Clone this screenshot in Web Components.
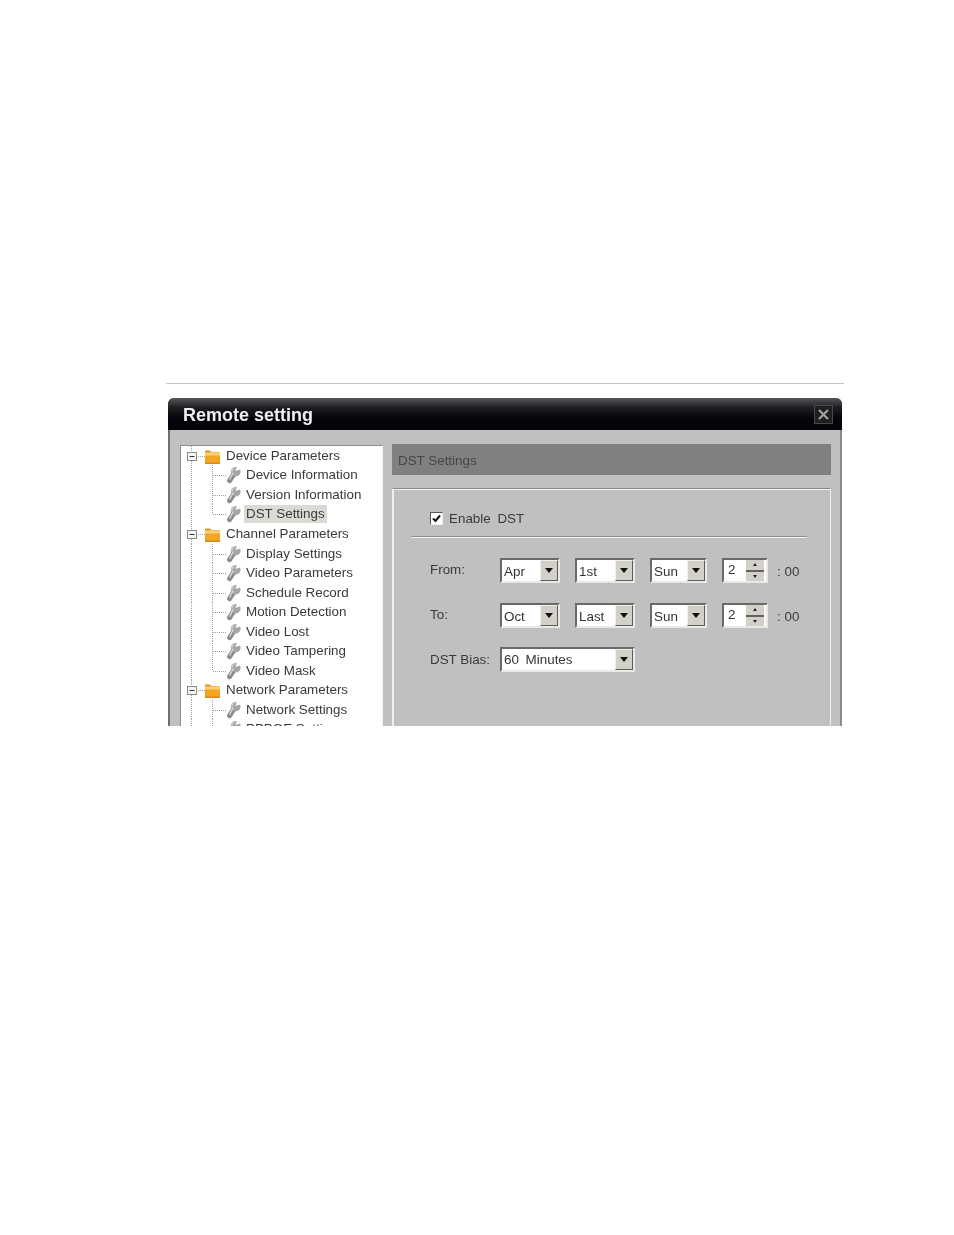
<!DOCTYPE html>
<html>
<head>
<meta charset="utf-8">
<title>Remote setting</title>
<style>
  html, body { margin: 0; background: #fff; }
  body { font-family: "Liberation Sans", Arial, sans-serif; }
</style>
</head>
<body>
<page-frame>
  <remote-dialog heading="Remote setting">
    <tree-panel slot="tree">
      <tree-row kind="folder">Device Parameters</tree-row>
      <tree-row>Device Information</tree-row>
      <tree-row>Version Information</tree-row>
      <tree-row end selected>DST Settings</tree-row>
      <tree-row kind="folder">Channel Parameters</tree-row>
      <tree-row>Display Settings</tree-row>
      <tree-row>Video Parameters</tree-row>
      <tree-row>Schedule Record</tree-row>
      <tree-row>Motion Detection</tree-row>
      <tree-row>Video Lost</tree-row>
      <tree-row>Video Tampering</tree-row>
      <tree-row end>Video Mask</tree-row>
      <tree-row kind="folder">Network Parameters</tree-row>
      <tree-row>Network Settings</tree-row>
      <tree-row>PPPOE Settings</tree-row>
    </tree-panel>
    <dst-panel slot="content"></dst-panel>
  </remote-dialog>
</page-frame>

<script>
class PageFrame extends HTMLElement {
  constructor() {
    super();
    this.attachShadow({ mode: 'open' }).innerHTML = `
      <style>
        :host { display: block; padding: 383px 110px 0 166px; height: 852px; }
        .rule { height: 1px; background: #c4c4c4; }
        .inner { padding: 14px 2px 0; }
      </style>
      <div class="rule"></div>
      <div class="inner"><slot></slot></div>
    `;
  }
}
customElements.define('page-frame', PageFrame);

class RemoteDialog extends HTMLElement {
  constructor() {
    super();
    this.attachShadow({ mode: 'open' }).innerHTML = `
      <style>
        :host {
          display: block; height: 328px; overflow: hidden;
          background: #c0c0c0; border-radius: 6px 6px 0 0;
          box-shadow: inset 2px 0 0 #6d6d6d, inset -2px 0 0 #8a8a8a;
          filter: blur(0.4px);
        }
        .title {
          height: 32px; display: flex; align-items: center; justify-content: space-between;
          padding: 2px 9px 0 15px; box-sizing: border-box;
          background: linear-gradient(#54565a 0, #1c1e21 30%, #04060b 62%, #02040a 100%);
          color: #f0f0f0; font-size: 18px; font-weight: bold;
        }
        .close {
          width: 19px; height: 19px; box-sizing: border-box; border: 1px solid #47484a;
          background: #1e1f21; display: flex; margin-top: -2px;
        }
        .body { display: flex; align-items: flex-start; padding: 15px 11px 0 12px; }
        .tree { flex: none; width: 203px; margin-right: 9px; }
        .content { flex: 1; min-width: 0; margin-top: -1px; }
      </style>
      <div class="title">
        <span id="heading"></span>
        <span class="close">
          <svg width="17" height="17" viewBox="0 0 17 17"><path d="M4 4l9 9M13 4l-9 9" stroke="#a2a2a2" stroke-width="2.200"/></svg>
        </span>
      </div>
      <div class="body">
        <div class="tree"><slot name="tree"></slot></div>
        <div class="content"><slot name="content"></slot></div>
      </div>
    `;
  }
  connectedCallback() {
    this.shadowRoot.getElementById('heading').textContent = this.getAttribute('heading');
  }
}
customElements.define('remote-dialog', RemoteDialog);

class TreePanel extends HTMLElement {
  constructor() {
    super();
    this.attachShadow({ mode: 'open' }).innerHTML = `
      <style>
        :host {
          display: block; height: 300px; box-sizing: border-box; padding: 0 0 0 2px;
          background: #fff; border: 1px solid #8d8d8d; border-right-color: #f4f4f4;
          border-bottom: 0;
        }
      </style>
      <slot></slot>
    `;
  }
}
customElements.define('tree-panel', TreePanel);

const folderIcon = `
  <path d="M22 4.500h5l1.500 1.500h7.500v2h-14z" fill="#d8982e"/>
  <rect x="22" y="6.500" width="15" height="11.500" rx="1" fill="#f4a521"/>
  <rect x="22" y="6.500" width="15" height="3" fill="#fccf78"/>
  <rect x="22" y="16.500" width="15" height="1.500" fill="#d58a1a"/>`;

const wrenchIcon = `
  <g transform="translate(44 2)">
    <path d="M2.600 13.600 7.300 6.400" stroke="#8c8c8c" stroke-width="5" stroke-linecap="round"/>
    <circle cx="8.800" cy="4.700" r="4.800" fill="#a6a6a6"/>
    <path d="M8.500 4 10 -1 14.500 2z" fill="#fff"/>
    <path d="M6.300 5.500 2.600 12.500" stroke="#dcdcdc" stroke-width="1.300"/>
    <path d="M5 4.500a4 4 0 0 1 2.500-3.300" fill="none" stroke="#d8d8d8" stroke-width="1.100"/>
  </g>`;

class TreeRow extends HTMLElement {
  constructor() {
    super();
    this.attachShadow({ mode: 'open' });
  }
  connectedCallback() {
    const folder = this.getAttribute('kind') === 'folder';
    const end = this.hasAttribute('end');
    const guides = folder ? `
      <path d="M8.500 0V5M8.500 15V20" stroke="#a0a0a0" stroke-dasharray="1 1"/>
      <path d="M13 10.500H22" stroke="#a0a0a0" stroke-dasharray="1 1"/>
      <rect x="4.500" y="6.500" width="9" height="8" fill="#f4f4f4" stroke="#8a8a8a"/>
      <path d="M6.500 10.500h5" stroke="#333"/>
      ${folderIcon}
    ` : `
      <path d="M8.500 0V20" stroke="#a0a0a0" stroke-dasharray="1 1"/>
      <path d="M29.500 0V${end ? 10 : 20}M30 10.500H43" stroke="#a0a0a0" stroke-dasharray="1 1"/>
      ${wrenchIcon}
    `;
    this.shadowRoot.innerHTML = `
      <style>
        :host { display: block; height: 19.55px; }
        .row { display: flex; align-items: center; height: 100%; color: #3a3a3a; font-size: 13.4px; white-space: nowrap; }
        svg { flex: none; display: block; }
        .label { padding: 1px 2px; margin-left: -2px; line-height: 16px; }
        :host([selected]) .label { background: #dcdad4; }
      </style>
      <div class="row">
        <svg width="${folder ? 43 : 63}" height="20" viewBox="0 0 ${folder ? 43 : 63} 20">
          ${guides}
        </svg>
        <span class="label"><slot></slot></span>
      </div>
    `;
  }
}
customElements.define('tree-row', TreeRow);

class DropCombo extends HTMLElement {
  constructor() {
    super();
    this.attachShadow({ mode: 'open' }).innerHTML = `
      <style>
        :host { display: inline-flex; height: 25px; box-sizing: border-box; background: #fff;
          border: 2px solid; border-color: #6b6b66 #e8e8e4 #e8e8e4 #6b6b66; }
        .value { flex: 1; padding-left: 2px; line-height: var(--line, 23px); font-size: 13.4px; color: #333; white-space: nowrap; }
        .arrow { flex: none; width: 18px; box-sizing: border-box; background: #d3d0ca;
          border: 1px solid; border-color: #efeeea #5c5c58 #5c5c58 #efeeea; display: flex; align-items: center; justify-content: center; }
        .arrow i { width: 0; height: 0; border: 4px solid transparent; border-top: 5px solid #111; border-bottom: 0; }
      </style>
      <span class="value"><slot></slot></span>
      <span class="arrow"><i></i></span>
    `;
  }
}
customElements.define('drop-combo', DropCombo);

class SpinBox extends HTMLElement {
  constructor() {
    super();
    this.attachShadow({ mode: 'open' }).innerHTML = `
      <style>
        :host { display: inline-flex; width: 46px; height: 25px; box-sizing: border-box; background: #fff;
          border: 2px solid; border-color: #6b6b66 #e8e8e4 #e8e8e4 #6b6b66; }
        .value { flex: 1; padding-left: 4px; line-height: 19px; font-size: 13.4px; color: #333; }
        .btns { flex: none; width: 18px; margin-right: 2px; display: flex; flex-direction: column; }
        .btns span { flex: 1; background: #d3d0ca; display: flex; align-items: center; justify-content: center; }
        .btns .u { border-bottom: 2px solid #62625e; }
        i { width: 0; height: 0; border: 2.500px solid transparent; }
        .u i { border-bottom: 3px solid #222; border-top: 0; }
        .d i { border-top: 3px solid #222; border-bottom: 0; }
      </style>
      <span class="value"><slot></slot></span>
      <span class="btns"><span class="u"><i></i></span><span class="d"><i></i></span></span>
    `;
  }
}
customElements.define('spin-box', SpinBox);

class DstPanel extends HTMLElement {
  constructor() {
    super();
    this.attachShadow({ mode: 'open' }).innerHTML = `
      <style>
        :host { display: block; color: #3a3a3a; font-size: 13.4px; }
        .head { height: 31px; background: #808080; color: #464646; padding-left: 6px; line-height: 34px; }
        .box { margin-top: 13px; height: 260px; box-sizing: border-box;
          border: 1px solid #f0f0f0; border-top-color: #8a8a8a; border-bottom: 0;
          box-shadow: inset 1px 1px 0 #f1f1f1; padding: 19px 23px 0 18px; }
        .check { display: flex; align-items: center; gap: 6px; height: 20px; padding-left: 19px; word-spacing: 3px; }
        .cb { width: 13px; height: 13px; box-sizing: border-box; background: #fff; border: 1px solid; border-color: #555 #eee #eee #555; display: flex; }
        hr { margin: 9px 0 0; height: 1px; border: 0; background: #f2f2f2; box-shadow: 0 -1px 0 #8f8f8f; }
        .grid { display: grid; grid-template-columns: 70px 75px 75px 72px 55px auto; align-items: center; row-gap: 20px; padding: 20px 0 0 19px; }
        .grid > * { justify-self: start; }
        .w60 { width: 60px; }
        .w57 { width: 57px; }
        .lab { position: relative; top: -1px; }
        .tail { position: relative; top: 1px; }
        .wide { grid-column: 2 / span 4; width: 135px; word-spacing: 3px; margin-top: -1px; --line: 21px; }
      </style>
      <div class="head">DST Settings</div>
      <div class="box">
        <div class="check">
          <span class="cb"><svg width="11" height="11" viewBox="0 0 11 11"><path d="M2 5.500l2.500 2.500L9 2.500" fill="none" stroke="#111" stroke-width="2"/></svg></span>
          <span>Enable DST</span>
        </div>
        <hr>
        <div class="grid">
          <span class="lab">From:</span>
          <drop-combo class="w60">Apr</drop-combo>
          <drop-combo class="w60">1st</drop-combo>
          <drop-combo class="w57">Sun</drop-combo>
          <spin-box>2</spin-box>
          <span class="tail">: 00</span>

          <span class="lab">To:</span>
          <drop-combo class="w60">Oct</drop-combo>
          <drop-combo class="w60">Last</drop-combo>
          <drop-combo class="w57">Sun</drop-combo>
          <spin-box>2</spin-box>
          <span class="tail">: 00</span>

          <span class="lab">DST Bias:</span>
          <drop-combo class="wide">60 Minutes</drop-combo>
        </div>
      </div>
    `;
  }
}
customElements.define('dst-panel', DstPanel);
</script>
</body>
</html>
